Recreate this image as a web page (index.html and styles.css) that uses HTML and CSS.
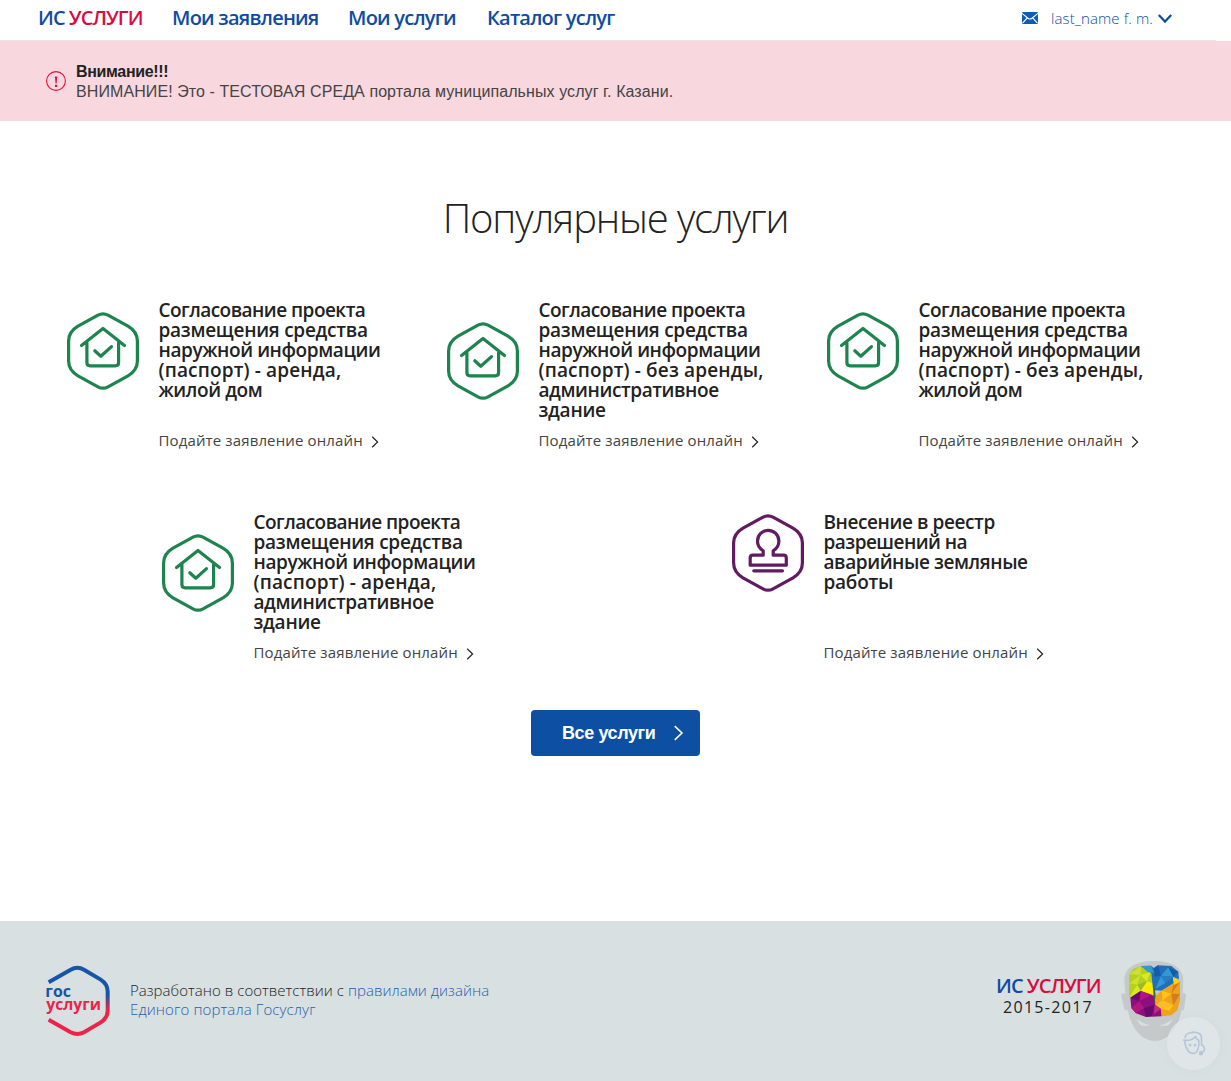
FILE: index.html
```html
<!DOCTYPE html>
<html lang="ru">
<head>
<meta charset="utf-8">
<title>ИС Услуги</title>
<link rel="stylesheet" href="styles.css">
</head>
<body>
<svg class="defs" width="0" height="0">
  <symbol id="hex" viewBox="0 0 72 78">
    <path d="M31 3.2Q36 .4 41 3.2L61 14.2Q70.4 19.8 70.4 29V49Q70.4 58.2 61 63.8L41 74.8Q36 77.6 31 74.8L11 63.8Q1.6 58.2 1.6 49V29Q1.6 19.8 11 14.2Z" fill="none" stroke="currentColor" stroke-width="3.2"/>
  </symbol>
  <symbol id="house" viewBox="0 0 72 78">
    <use href="#hex"/>
    <g fill="none" stroke="currentColor" stroke-width="3.2" stroke-linecap="round" stroke-linejoin="round">
      <path d="M14.5 33.5L36 16.5L57.5 33.5M19.9 30.5V50.6Q19.9 53.9 23.2 53.9H48.3Q51.6 53.9 51.6 50.6V30.5"/>
      <path d="M27.8 38.8L33.8 44.3L44.5 34.6"/>
    </g>
  </symbol>
  <symbol id="stamp" viewBox="0 0 72 78">
    <use href="#hex"/>
    <g fill="none" stroke="currentColor" stroke-width="3.2" stroke-linecap="round" stroke-linejoin="round">
      <path d="M31.2 41.2V36.8C27.5 34.5 25.5 31 25.5 27A10.7 10.7 0 0 1 46.9 27C46.9 31 45 34.5 41.2 36.8V41.2H51.5Q54.3 41.2 54.3 44V51.2H18.2V44Q18.2 41.2 21 41.2Z"/>
      <path d="M21.8 56.8H50.5"/>
    </g>
  </symbol>
  <symbol id="arrow" viewBox="0 0 8 12">
    <path d="M1.2 .8L6.6 6L1.2 11.2" fill="none" stroke="currentColor" stroke-width="1.2"/>
  </symbol>
</svg>

<header class="header">
  <nav class="nav">
    <a class="brand">ИС <span class="accent">УСЛУГИ</span></a>
    <a class="nav-link nav-requests">Мои заявления</a>
    <a class="nav-link nav-services">Мои услуги</a>
    <a class="nav-link nav-catalog">Каталог услуг</a>
  </nav>
  <div class="user">
    <svg class="mail" width="16" height="12" viewBox="0 0 16 12"><rect width="16" height="12" rx="1" fill="#0f5cb4"/><path d="M0 1.4L6 6.2Q8 7.8 10 6.2L16 1.4M.6 11.2L5 6.2M15.4 11.2L11 6.2" fill="none" stroke="#fff" stroke-width="1.1"/></svg>
    <span class="user-name">last_name f. m.</span>
    <svg class="chevron" width="14" height="9" viewBox="0 0 14 9"><path d="M.8 1L7 7.6L13.2 1" fill="none" stroke="#0d4ca2" stroke-width="2.2"/></svg>
  </div>
</header>

<section class="notice">
  <svg width="20" height="20" viewBox="0 0 20 20"><circle cx="10" cy="10" r="9.4" fill="none" stroke="#e0103e" stroke-width="1.1"/><path d="M8.9 5.5H11.3L10.6 12.5H9.6ZM9 13.8H11.2V16H9Z" fill="#e0103e"/></svg>
  <div class="notice-body">
    <div class="notice-title">Внимание!!!</div>
    <div class="notice-text">ВНИМАНИЕ! Это - ТЕСТОВАЯ СРЕДА портала муниципальных услуг г. Казани.</div>
  </div>
</section>

<main class="main">
  <h1 class="heading">Популярные услуги</h1>
  <div class="services">
    <article class="service">
      <div class="service-top"><svg class="service-icon"><use href="#house"/></svg>
      <h2 class="service-title"><span class="tight">Согласование проекта</span><br><span class="mid">размещения средства</span><br>наружной информации<br><span class="loose">(паспорт) - аренда,</span><br>жилой дом</h2></div>
      <a class="service-link">Подайте заявление онлайн<svg class="arrow"><use href="#arrow"/></svg></a>
    </article>
    <article class="service">
      <div class="service-top"><svg class="service-icon"><use href="#house"/></svg>
      <h2 class="service-title"><span class="tight">Согласование проекта</span><br><span class="mid">размещения средства</span><br>наружной информации<br><span class="loose">(паспорт) - без аренды,</span><br>административное<br><span class="mid">здание</span></h2></div>
      <a class="service-link">Подайте заявление онлайн<svg class="arrow"><use href="#arrow"/></svg></a>
    </article>
    <article class="service">
      <div class="service-top"><svg class="service-icon"><use href="#house"/></svg>
      <h2 class="service-title"><span class="tight">Согласование проекта</span><br><span class="mid">размещения средства</span><br>наружной информации<br><span class="loose">(паспорт) - без аренды,</span><br>жилой дом</h2></div>
      <a class="service-link">Подайте заявление онлайн<svg class="arrow"><use href="#arrow"/></svg></a>
    </article>
    <article class="service">
      <div class="service-top"><svg class="service-icon"><use href="#house"/></svg>
      <h2 class="service-title"><span class="tight">Согласование проекта</span><br><span class="mid">размещения средства</span><br>наружной информации<br><span class="loose">(паспорт) - аренда,</span><br>административное<br><span class="mid">здание</span></h2></div>
      <a class="service-link">Подайте заявление онлайн<svg class="arrow"><use href="#arrow"/></svg></a>
    </article>
    <article class="service">
      <div class="service-top"><svg class="service-icon service-icon-stamp"><use href="#stamp"/></svg>
      <h2 class="service-title">Внесение в реестр<br><span class="tight">разрешений на</span><br>аварийные земляные<br><span class="mid">работы</span></h2></div>
      <a class="service-link">Подайте заявление онлайн<svg class="arrow"><use href="#arrow"/></svg></a>
    </article>
  </div>
  <a class="all-button"><span class="all-label">Все услуги</span><svg class="all-arrow"><use href="#arrow"/></svg></a>
</main>

<footer class="footer">
  <svg class="gos-logo" width="66" height="72" viewBox="45 45 198 216">
    <defs><linearGradient id="edge" gradientUnits="userSpaceOnUse" x1="0" y1="135" x2="0" y2="180"><stop offset="0" stop-color="#1755a6"/><stop offset="1" stop-color="#ea2549"/></linearGradient></defs>
    <path d="M56 97L122 59Q142 47 162 59L211 88Q233 102 233 124V182Q233 204 211 218L162 247Q142 257 122 247L56 209" fill="none" stroke="url(#edge)" stroke-width="12"/>
    <text class="gos-text" x="46" y="142" textLength="77" lengthAdjust="spacingAndGlyphs" fill="#1755a6">гос</text>
    <text class="gos-text" x="49" y="181" textLength="164" lengthAdjust="spacingAndGlyphs" fill="#ea2549">услуги</text>
  </svg>
  <p class="credits">Разработано в соответствии с <a>правилами дизайна</a><br><a class="credits-second">Единого портала Госуслуг</a></p>
  <div class="copyright">
    <div class="brand">ИС <span class="accent">УСЛУГИ</span></div>
    <div class="years">2015-2017</div>
  </div>
  <svg class="head" width="68" height="84" viewBox="30 30 204 252">
    <path d="M131 33C185 33 220 52 220 92L218 130Q229 126 228 139L222 176Q220 184 214 181C208 223 178 273 135 273C90 273 60 223 54 181Q46 184 43 176L34 139Q33 126 46 132L43 92C43 52 78 33 131 33Z" fill="#c6c9ca"/>
    <path d="M80 208Q99 222 119 226Q103 230 91 224Q84 219 80 208ZM188 208Q170 222 149 226Q164 230 177 224Q184 219 188 208Z" fill="#d9e0e2"/>
    <path d="M93 48L70 56L58 73L57 143L92 122L131 136L131 68Z" fill="#b5cf23"/>
    <path d="M93 48L58 73L91 75ZM59 100L91 75L82 104Z" fill="#d0df35"/><path d="M91 75L121 67L111 94ZM57 143L82 104L92 122Z" fill="#dce723"/><path d="M92 122L111 94L131 100V136Z" fill="#fbea08"/><path d="M82 104L111 94L92 122Z" fill="#98bd24"/>
    <path d="M93 48L123 47L132 54L144 46L184 48L205 65L207 88L189 81L192 99L155 122L136 121L131 136L124 70Z" fill="#1f70b9"/>
    <path d="M93 48L123 47L132 69L113 66ZM153 77L175 52L190 80ZM136 117L153 77L166 99Z" fill="#3398d3"/><path d="M132 54L144 46L153 77L134 80ZM175 52L205 65L190 80Z" fill="#175aa8"/><path d="M153 77L190 80L166 99Z" fill="#277fc5"/>
    <path d="M61 143L92 123L134 138L137 164L155 175V199L108 201L78 190L64 174Z" fill="#8b107b"/>
    <path d="M92 123L125 134L88 154ZM64 174L88 154L102 174L78 190Z" fill="#b31683"/><path d="M61 143L92 123L88 154ZM102 174L134 165L125 197L108 201Z" fill="#68096c"/><path d="M134 165L155 175L132 192Z" fill="#c22983"/>
    <path d="M136 164L137 138L155 122L192 99L189 81L210 95V149L202 181L184 196L155 199L152 175Z" fill="#efa21d"/>
    <path d="M155 122L184 131L158 151ZM152 175L190 165L178 182Z" fill="#ffc415"/><path d="M210 95L184 131L192 99ZM184 131L210 132L190 165Z" fill="#d47c20"/><path d="M136 164L158 151L190 165L152 175Z" fill="#f9bd25"/><path d="M189 81L210 96L192 105Z" fill="#ffd500"/><path d="M131 136L133 104L137 138L134 160Z" fill="#356849"/>
  </svg>
  <button class="assistant" aria-label="Помощник">
    <svg width="24" height="25" viewBox="0 0 24 25" fill="none" stroke="#b3c7d8" stroke-width="1.6" stroke-linecap="round" stroke-linejoin="round"><path d="M1.5 9Q6 10 9.5 8.5Q12 7.5 13.5 5.5Q14.5 8.5 16.8 9.5V14Q16 22.5 11 22.5Q5 22 3.2 13L2.5 9.5M3.2 6.5Q4 2 9 1.8Q11 .6 14 1.6Q19 1.5 19.5 7V14"/><path d="M20 14Q23.5 16 22 20L19.5 22"/><circle cx="19" cy="22.3" r="1.4" fill="#b3c7d8"/><circle cx="8" cy="14.2" r=".6" fill="#b3c7d8"/><circle cx="13" cy="14.2" r=".6" fill="#b3c7d8"/></svg>
  </button>
</footer>
</body>
</html>
```
FILE: styles.css
```css
* { box-sizing: border-box; }
body {
  margin: 0;
  min-height: 1081px;
  display: flex;
  flex-direction: column;
  position: relative;
  background: #fff;
  color: #222;
  font-family: "Open Sans", "Noto Sans", sans-serif;
  white-space: nowrap;
}
.defs { position: absolute; }
.header {
  height: 41px;
  width: 1216px;
  padding: 0 44px 4px 38px;
  display: flex;
  justify-content: space-between;
  align-items: center;
  border-bottom: 1px solid #e6e6e6;
}
.nav { display: flex; gap: 30px; align-items: center; }
.brand { font-size: 20px; line-height: 22px; font-weight: 600; color: #0d4ca2; width: 104px; letter-spacing: -.95px; }
.accent { color: #db0a3e; }
.nav-link { font-size: 20px; line-height: 22px; font-weight: 600; color: #0d4ca2; letter-spacing: -.77px; }
.nav-requests { width: 146px; }
.nav-services { width: 109px; }
.nav-catalog { width: 130px; }
.user { display: flex; align-items: center; color: #0d4ca2; }
.user-name { width: 102px; margin: 0 5px 0 13px; font-size: 15px; font-weight: 300; letter-spacing: .1px; }
.notice {
  height: 80px;
  padding-left: 46px;
  display: flex;
  align-items: center;
  gap: 10px;
  background: #f8d7de;
  font: 16px/20px "Liberation Sans", Arial, sans-serif;
}
.notice-body { padding-top: 2px; }
.notice-title { font-weight: 700; letter-spacing: -.33px; }
.notice-text { color: #444; letter-spacing: .085px; }
.main { height: 800px; display: flex; flex-direction: column; align-items: center; }
.heading { margin: 70px 0 0; font-size: 40px; line-height: 54px; font-weight: 300; letter-spacing: -1.15px; }
.services {
  width: 1140px;
  margin-top: 55px;
  display: flex;
  flex-wrap: wrap;
  justify-content: space-around;
  align-items: stretch;
}
.service {
  width: 380px;
  height: 212px;
  padding-left: 21px;
  display: flex;
  flex-direction: column;
}
.service-top { display: flex; align-items: center; gap: 20px; }
.service-icon { width: 72px; height: 78px; color: #1d844f; position: relative; top: 1px; }
.service-icon-stamp { color: #621b62; }
.service-title { margin: 0; font-size: 19px; line-height: 20px; font-weight: 600; letter-spacing: -.41px; }
.tight { letter-spacing: -.53px; }
.mid { letter-spacing: -.26px; }
.loose { letter-spacing: .15px; }
.service-link {
  margin: auto 0 0 92px;
  height: 82px;
  display: flex;
  align-items: flex-start;
  gap: 8px;
  font-size: 15px;
  line-height: 20px;
  letter-spacing: .13px;
  color: #444;
}
.arrow { width: 8px; height: 12px; margin-top: 6px; color: #222; }
.all-button {
  width: 169px;
  height: 46px;
  margin-top: -14px;
  padding-left: 31px;
  display: flex;
  align-items: center;
  gap: 18px;
  border-radius: 4px;
  background: #0d4fa3;
  color: #fff;
  font: 700 18px/22px "Liberation Sans", Arial, sans-serif;
}
.all-label { width: 93px; letter-spacing: -.4px; }
.all-arrow { width: 11px; height: 16px; }
.footer {
  height: 160px;
  padding-left: 45px;
  display: flex;
  align-items: center;
  background: #d9e0e2;
}
.gos-text { font: 700 48px "Open Sans", "Noto Sans", sans-serif; }
.credits { width: 360px; margin: -2px 0 0 19px; font-size: 15px; line-height: 19px; font-weight: 300; letter-spacing: .04px; }
.credits a { color: #1b5fb0; }
.credits .credits-second { letter-spacing: .12px; }
.copyright { margin: -10px 20px 0 auto; width: 104px; }
.years { font-size: 16px; line-height: 20px; padding-left: 7px; letter-spacing: 1.3px; }
.head { margin: 2px 43px 0 0; }
.assistant {
  position: absolute;
  right: 11px;
  bottom: 11px;
  width: 53px;
  height: 53px;
  padding: 0;
  display: grid;
  place-items: center;
  border: 0;
  border-radius: 50%;
  background: rgba(225, 231, 234, .8);
  box-shadow: 0 0 12px rgba(160, 160, 160, .08);
}
```
